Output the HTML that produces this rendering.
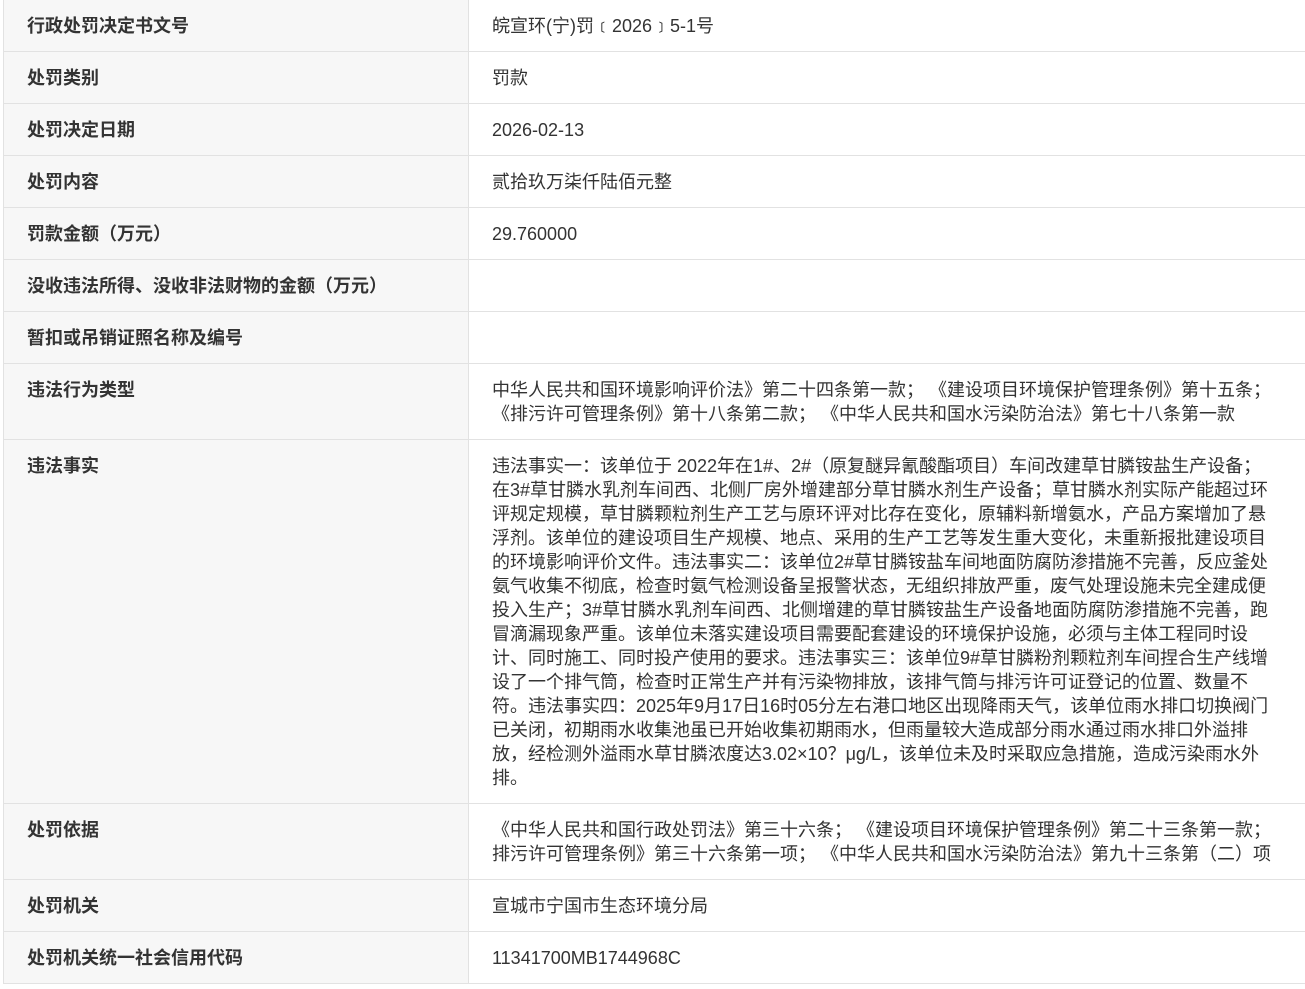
<!DOCTYPE html>
<html><head><meta charset="utf-8"><style>
body{margin:0;background:#fff;width:1305px;height:989px;overflow:hidden;font-family:"Liberation Sans","Noto Sans CJK SC",sans-serif;color:#333;}
.t{position:absolute;left:3px;top:0;width:1302px;border-left:1px solid #e2e2e2;}
.r{display:flex;border-bottom:1px solid #e2e2e2;box-sizing:border-box;}
.l{width:465px;background:#f7f7f7;border-right:1px solid #e2e2e2;box-sizing:border-box;padding:14px 0 0 23px;font-weight:bold;font-size:18px;line-height:24px;}
.v{flex:1;padding:14px 0 0 23px;font-size:18px;line-height:24px;white-space:nowrap;}
</style></head><body><div class="t">
<div class="r" style="height:52px"><div class="l">行政处罚决定书文号</div><div class="v">皖宣环(宁)罚﹝2026﹞5-1号</div></div>
<div class="r" style="height:52px"><div class="l">处罚类别</div><div class="v">罚款</div></div>
<div class="r" style="height:52px"><div class="l">处罚决定日期</div><div class="v">2026-02-13</div></div>
<div class="r" style="height:52px"><div class="l">处罚内容</div><div class="v">贰拾玖万柒仟陆佰元整</div></div>
<div class="r" style="height:52px"><div class="l">罚款金额（万元）</div><div class="v">29.760000</div></div>
<div class="r" style="height:52px"><div class="l">没收违法所得、没收非法财物的金额（万元）</div><div class="v"></div></div>
<div class="r" style="height:52px"><div class="l">暂扣或吊销证照名称及编号</div><div class="v"></div></div>
<div class="r" style="height:76px"><div class="l">违法行为类型</div><div class="v">中华人民共和国环境影响评价法》第二十四条第一款； 《建设项目环境保护管理条例》第十五条；<br>《排污许可管理条例》第十八条第二款； 《中华人民共和国水污染防治法》第七十八条第一款</div></div>
<div class="r" style="height:364px"><div class="l">违法事实</div><div class="v">违法事实一：该单位于 2022年在1#、2#（原复醚异氰酸酯项目）车间改建草甘膦铵盐生产设备；<br>在3#草甘膦水乳剂车间西、北侧厂房外增建部分草甘膦水剂生产设备；草甘膦水剂实际产能超过环<br>评规定规模，草甘膦颗粒剂生产工艺与原环评对比存在变化，原辅料新增氨水，产品方案增加了悬<br>浮剂。该单位的建设项目生产规模、地点、采用的生产工艺等发生重大变化，未重新报批建设项目<br>的环境影响评价文件。违法事实二：该单位2#草甘膦铵盐车间地面防腐防渗措施不完善，反应釜处<br>氨气收集不彻底，检查时氨气检测设备呈报警状态，无组织排放严重，废气处理设施未完全建成便<br>投入生产；3#草甘膦水乳剂车间西、北侧增建的草甘膦铵盐生产设备地面防腐防渗措施不完善，跑<br>冒滴漏现象严重。该单位未落实建设项目需要配套建设的环境保护设施，必须与主体工程同时设<br>计、同时施工、同时投产使用的要求。违法事实三：该单位9#草甘膦粉剂颗粒剂车间捏合生产线增<br>设了一个排气筒，检查时正常生产并有污染物排放，该排气筒与排污许可证登记的位置、数量不<br>符。违法事实四：2025年9月17日16时05分左右港口地区出现降雨天气，该单位雨水排口切换阀门<br>已关闭，初期雨水收集池虽已开始收集初期雨水，但雨量较大造成部分雨水通过雨水排口外溢排<br>放，经检测外溢雨水草甘膦浓度达3.02×10？μg/L，该单位未及时采取应急措施，造成污染雨水外<br>排。</div></div>
<div class="r" style="height:76px"><div class="l">处罚依据</div><div class="v">《中华人民共和国行政处罚法》第三十六条； 《建设项目环境保护管理条例》第二十三条第一款；<br>排污许可管理条例》第三十六条第一项； 《中华人民共和国水污染防治法》第九十三条第（二）项</div></div>
<div class="r" style="height:52px"><div class="l">处罚机关</div><div class="v">宣城市宁国市生态环境分局</div></div>
<div class="r" style="height:52px"><div class="l">处罚机关统一社会信用代码</div><div class="v">11341700MB1744968C</div></div>
</div></body></html>
